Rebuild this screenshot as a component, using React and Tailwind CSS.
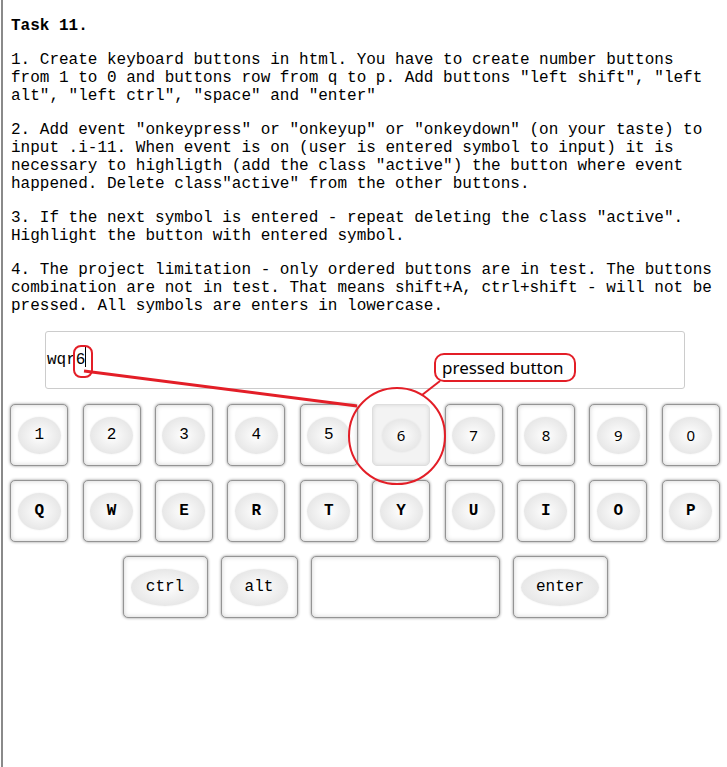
import React from "react";

const mono = "font-['Liberation_Mono','Courier_New',monospace]";
const sans = "font-['Noto_Sans','Open_Sans',sans-serif]";

function Key({ label, width = "w-[58px]", bold = false, sansFont = false, active = false, empty = false }) {
  const keyCls = active
    ? "bg-[#f3f3f3] border border-[#dedede] shadow-[inset_0_0_4px_rgba(0,0,0,0.12)]"
    : "bg-white border border-[#949494] shadow-[0_0_3px_rgba(0,0,0,0.45),inset_0_0_5px_rgba(0,0,0,0.18)]";
  const ellCls = active
    ? "min-w-[39px] h-[33px] text-[15px]"
    : "min-w-[43px] h-[37px] " + (sansFont ? "text-[15px]" : "text-[16px]");
  return (
    <div className={`${width} h-[62px] rounded-[5px] flex items-center justify-center ${keyCls}`}>
      {!empty && (
        <div
          className={`${ellCls} px-[15px] rounded-[50%] flex items-center justify-center text-black bg-[radial-gradient(ellipse_at_center,#ffffff_0%,#f1f1f1_40%,#e4e4e4_80%,#e8e8e8_100%)] shadow-[0_0_2px_rgba(0,0,0,0.08)] ${sansFont || active ? sans : mono} ${bold ? "font-bold" : "font-normal"}`}
        >
          {label}
        </div>
      )}
    </div>
  );
}

export default function App() {
  const nums = ["1", "2", "3", "4", "5", "6", "7", "8", "9", "0"];
  const letters = ["Q", "W", "E", "R", "T", "Y", "U", "I", "O", "P"];
  return (
    <div className="relative w-[727px] min-h-[767px] bg-white">
      <div className={`ml-px min-h-[767px] border-l-2 border-[#8a8a8a] flex flex-col ${mono} text-[16px] leading-[18px] text-black`}>
        <div className="pl-[8px] pr-[11px] pt-[17px] flex flex-col gap-4">
          <p className="font-bold">Task 11.</p>
          <p>
            1. Create keyboard buttons in html. You have to create number buttons from 1 to 0 and buttons row from q to p. Add buttons "left shift", "left alt", "left ctrl", "space" and "enter"
          </p>
          <p>
            2. Add event "onkeypress" or "onkeyup" or "onkeydown" (on your taste) to input .i-11. When event is on (user is entered symbol to input) it is necessary to highligth (add the class "active") the button where event happened. Delete class"active" from the other buttons.
          </p>
          <p>
            3. If the next symbol is entered - repeat deleting the class "active". Highlight the button with entered symbol.
          </p>
          <p>
            4. The project limitation - only ordered buttons are in test. The buttons combination are not in test. That means shift+A, ctrl+shift - will not be pressed. All symbols are enters in lowercase.
          </p>
        </div>

        <div className="mt-[16px] flex justify-center">
          <div className="w-[640px] h-[58px] border border-[#cccccc] rounded-[3px] flex items-center pl-px">
            <span>wqr6</span>
            <span className="w-px h-[20px] bg-black -mt-[6px]"></span>
          </div>
        </div>

        <div className="mt-[15px] flex flex-col gap-[14px]">
          <div className="flex justify-around">
            {nums.map((n, i) => (
              <Key key={n} label={n} sansFont={i >= 5} active={n === "6"} />
            ))}
          </div>
          <div className="flex justify-around">
            {letters.map((l) => (
              <Key key={l} label={l} bold />
            ))}
          </div>
          <div className="flex justify-center gap-[13px]">
            <Key label="ctrl" width="w-[85px]" />
            <Key label="alt" width="w-[77px]" />
            <Key label="" width="w-[189px]" empty />
            <Key label="enter" width="w-[95px]" />
          </div>
        </div>
      </div>

      {/* annotation overlay */}
      <svg className="absolute left-0 top-0 pointer-events-none" width="727" height="767" viewBox="0 0 727 767">
        <rect x="74" y="346" width="18" height="31" rx="7" fill="none" stroke="#e31e27" strokeWidth="2" />
        <line x1="84" y1="371" x2="357" y2="406" stroke="#e31e27" strokeWidth="3" />
        <circle cx="397" cy="436" r="48" fill="none" stroke="#e31e27" strokeWidth="2" />
        <line x1="440" y1="381" x2="422" y2="395" stroke="#e31e27" strokeWidth="2" />
      </svg>
      <div className={`absolute left-[434px] top-[353px] w-[142px] h-[29px] border-2 border-[#e31e27] rounded-[10px] bg-white flex items-center pl-[6px] ${sans} text-[17px] text-black leading-none`}>
        pressed button
      </div>
    </div>
  );
}
